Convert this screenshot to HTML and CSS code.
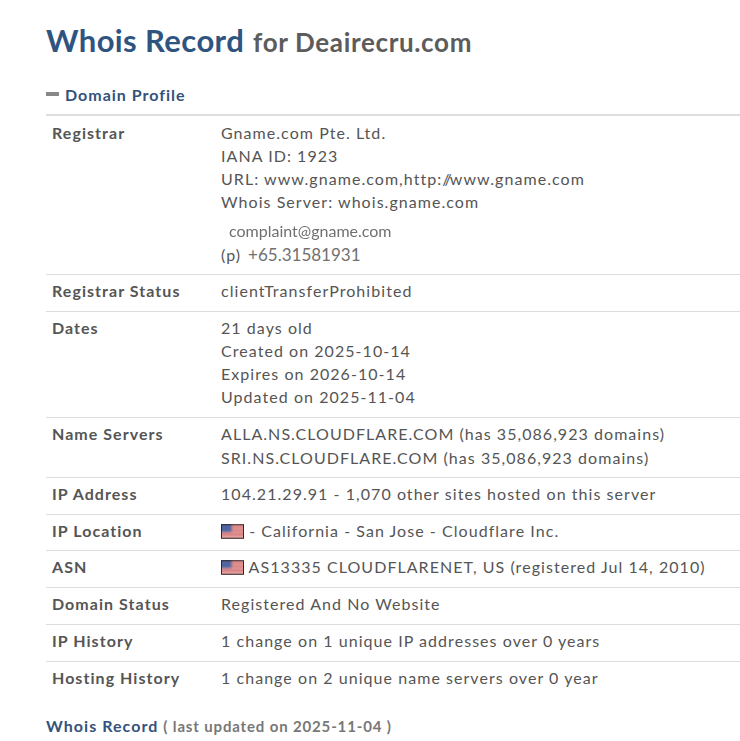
FILE: index.html
```html
<!DOCTYPE html>
<html lang="en">
<head>
<meta charset="utf-8">
<title>Whois Record for Deairecru.com</title>
<link rel="stylesheet" href="styles.css">
</head>
<body>
<main class="page">
  <h1 class="title"><span class="title-main">Whois Record</span> <span class="title-sub">for Deairecru.com</span></h1>
  <h2 class="section"><span class="dash"></span>Domain Profile</h2>
  <div class="table">
    <div class="row first">
      <div class="label">Registrar</div>
      <div class="value">
        <div>Gname.com Pte. Ltd.</div>
        <div>IANA ID: 1923</div>
        <div>URL: www.gname.com,http:<span class="slash-a">/</span><span class="slash-b">/</span>www.gname.com</div>
        <div>Whois Server: whois.gname.com</div>
        <div class="email">complaint@gname.com</div>
        <div class="phone">(p)<span class="phone-num">+65.31581931</span></div>
      </div>
    </div>
    <div class="row">
      <div class="label">Registrar Status</div>
      <div class="value">clientTransferProhibited</div>
    </div>
    <div class="row">
      <div class="label">Dates</div>
      <div class="value">
        <div>21 days old</div>
        <div>Created on 2025-10-14</div>
        <div>Expires on 2026-10-14</div>
        <div>Updated on 2025-11-04</div>
      </div>
    </div>
    <div class="row ns-row">
      <div class="label">Name Servers</div>
      <div class="value">
        <div class="ns">ALLA.NS.CLOUDFLARE.COM (has 35,086,923 domains)</div>
        <div class="ns">SRI.NS.CLOUDFLARE.COM (has 35,086,923 domains)</div>
      </div>
    </div>
    <div class="row">
      <div class="label">IP Address</div>
      <div class="value">104.21.29.91 - 1,070 other sites hosted on this server</div>
    </div>
    <div class="row">
      <div class="label">IP Location</div>
      <div class="value"><svg class="flag" viewBox="0 0 24 15"><g class="flag-art"><rect x="-2" y="-2" width="28" height="19" fill="#e8a8a6"/><path d="M0 2.5h24M0 6.5h24M0 10.5h24" stroke="#cf6468" stroke-width="1.6"/><rect x="-2" y="-2" width="13" height="10" fill="#50659f"/></g><rect x=".5" y=".5" width="23" height="14" fill="none" stroke="#2a2226" stroke-width="1"/></svg> - California - San Jose - Cloudflare Inc.</div>
    </div>
    <div class="row">
      <div class="label">ASN</div>
      <div class="value"><svg class="flag" viewBox="0 0 24 15"><g class="flag-art"><rect x="-2" y="-2" width="28" height="19" fill="#e8a8a6"/><path d="M0 2.5h24M0 6.5h24M0 10.5h24" stroke="#cf6468" stroke-width="1.6"/><rect x="-2" y="-2" width="13" height="10" fill="#50659f"/></g><rect x=".5" y=".5" width="23" height="14" fill="none" stroke="#2a2226" stroke-width="1"/></svg> AS13335 CLOUDFLARENET, US (registered Jul 14, 2010)</div>
    </div>
    <div class="row">
      <div class="label">Domain Status</div>
      <div class="value">Registered And No Website</div>
    </div>
    <div class="row">
      <div class="label">IP History</div>
      <div class="value">1 change on 1 unique IP addresses over 0 years</div>
    </div>
    <div class="row last">
      <div class="label">Hosting History</div>
      <div class="value">1 change on 2 unique name servers over 0 year</div>
    </div>
  </div>
  <p class="footer"><span class="footer-main">Whois Record</span> <span class="footer-sub">( last updated on 2025-11-04 )</span></p>
</main>
</body>
</html>
```
FILE: styles.css
```css
* { box-sizing: border-box; }
html, body { margin: 0; padding: 0; background: #fff; overflow: hidden; }
body { font-family: Lato, sans-serif; color: #555; height: 741px; }
.page { padding: 20px 0 0 46px; }
.title { margin: 0; font-size: 31px; line-height: 40px; font-weight: 700; letter-spacing: 0.4px; white-space: nowrap; }
.title-main { color: #2f5480; }
.title-sub { color: #5c5c5c; font-size: 26px; font-weight: 700; letter-spacing: 0.65px; margin-left: 1px; }
.section { margin: 22px 0 0; font-size: 16px; line-height: 22px; font-weight: 700; color: #34527c; letter-spacing: 1px; display: flex; align-items: center; padding-bottom: 8px; border-bottom: 2px solid #ddd; }
.dash { width: 13px; height: 4px; background: #888; margin-right: 6px; position: relative; top: -1px; }
.table { display: flex; flex-direction: column; }
.row { display: flex; padding: 4px 0 8.85px 6px; border-bottom: 1px solid #ddd; font-size: 16px; line-height: 23px; letter-spacing: 1.05px; }
.row.first { padding-top: 5px; padding-bottom: 8px; }
.row.last { border-bottom: 0; }
.label { width: 169px; flex: none; font-weight: 700; color: #555; }
.value { color: #555; white-space: nowrap; }
.ns { line-height: 24px; }
.ns-row { padding-bottom: 7px; }
.slash-a { letter-spacing: -5px; }
.slash-b { letter-spacing: -2px; }
.email { margin: 6px 0 0 8px; height: 23px; font-size: 16px; letter-spacing: 0; color: #707070; filter: blur(0.3px); }
.phone { margin-top: 1px; }
.phone-num { margin-left: 7px; color: #707070; font-size: 17px; letter-spacing: 0; font-weight: 400; }
.flag { width: 23px; height: 15px; vertical-align: -2px; }
.flag-art { filter: blur(1px); }
.footer { margin: 17px 0 0; font-size: 16px; line-height: 22px; font-weight: 700; letter-spacing: 1.05px; white-space: nowrap; }
.footer-main { color: #34527c; }
.footer-sub { color: #777; font-size: 15px; font-weight: 700; letter-spacing: 0.85px; }
```
